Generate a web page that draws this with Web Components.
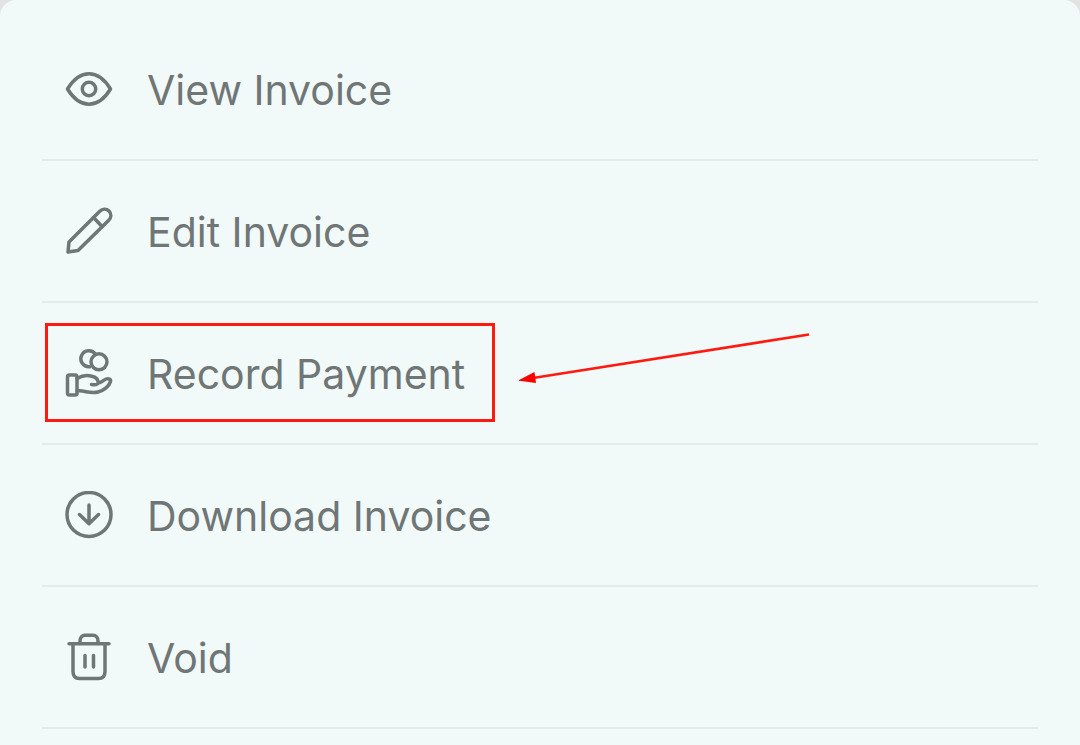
<!DOCTYPE html>
<html lang="en">
<head>
<meta charset="utf-8">
<meta name="viewport" content="width=device-width, initial-scale=1">
<title>Invoice actions</title>
<style>
  :root {
    --surface-color: #f1faf9;
    --backdrop-color: #e2e2e2;
    --text-color: #6f7675;
    --border-color: #e4ebea;
    --mark-color: #ff1a10;
    --font-family: Inter, "Liberation Sans", sans-serif;
  }
  body {
    margin: 0;
    background: var(--backdrop-color);
  }
</style>
</head>
<body>
<action-sheet>
  <action-item icon="eye">View Invoice</action-item>
  <action-item icon="pencil">Edit Invoice</action-item>
  <action-item icon="payment">Record Payment<callout-mark slot="mark"></callout-mark></action-item>
  <action-item icon="download">Download Invoice</action-item>
  <action-item icon="trash">Void</action-item>
</action-sheet>

<script>
const icons = {
  eye: `
    <path d="M2.5 24C8 15 15.5 8.8 24 8.8S40 15 45.5 24C40 33 32.5 39.2 24 39.2S8 33 2.5 24Z"/>
    <circle cx="24" cy="24" r="6.7"/>`,
  pencil: `
    <path d="M3 45 4 35 34.500 4.500C37.500 1.500 41.500 1.500 44 4S46.500 10.500 43.500 13.500L13 43.500Z"/>
    <path d="M28.500 10.500 37 19.500"/>`,
  payment: `
    <path d="M24.500 17.800A8 8 0 1 1 30.500 5.300"/>
    <circle cx="34" cy="12.800" r="8"/>
    <rect x="2.500" y="26" width="9.500" height="20" rx="2"/>
    <path d="M12 29.500C17 26.500 22 26 26 27C30.500 28 33.500 30.500 33 34C32.700 35.800 30.500 36 26.500 35.500M33.500 34C37 33.500 38.500 31 41 30C43.500 29 46 30.500 45.500 32.500C44.500 37 38 42 33 43C25 45 19 41 12 42"/>`,
  download: `
    <circle cx="24" cy="23.500" r="22"/>
    <path d="M24 14V32.500M14.500 23.500 24 32.700 33.500 23.500"/>`,
  trash: `
    <path d="M4 10.800H44M8 10.800V38.500C8 43 10.500 45.500 14.500 45.500H33.500C37.500 45.500 40 43 40 38.500V10.800"/>
    <path d="M15 10.500V8C15 4.500 17 2.300 20 2.300H28C31 2.300 33 4.500 33 8V10.500M20 22.500V34M28.500 22.500V34"/>`,
};

class ActionSheet extends HTMLElement {
  constructor() {
    super();
    this.attachShadow({ mode: "open" });
  }

  connectedCallback() {
    this.shadowRoot.innerHTML = `
      <style>
        :host {
          display: block;
          box-sizing: border-box;
          min-height: 100vh;
          padding: 19px 42px 0;
          background: var(--surface-color);
          border-radius: 16px 16px 0 0;
          font-family: var(--font-family);
          color: var(--text-color);
        }
        nav {
          display: flex;
          flex-direction: column;
        }
      </style>
      <nav aria-label="Invoice actions"><slot></slot></nav>
    `;
  }
}

class ActionItem extends HTMLElement {
  constructor() {
    super();
    this.attachShadow({ mode: "open" });
  }

  connectedCallback() {
    this.shadowRoot.innerHTML = `
      <style>
        :host {
          display: block;
          position: relative;
          border-bottom: 2px solid var(--border-color);
        }
        button {
          display: flex;
          align-items: center;
          gap: 34px;
          width: 100%;
          padding: 45px 23px;
          border: 0;
          background: none;
          color: inherit;
          font-family: inherit;
          font-size: 41px;
          line-height: 48px;
          text-align: left;
          cursor: pointer;
        }
        span {
          padding-top: 2px;
        }
        svg {
          flex: none;
          width: 48px;
          height: 48px;
          fill: none;
          stroke: currentColor;
          stroke-width: 3.5;
          stroke-linecap: round;
          stroke-linejoin: round;
        }
      </style>
      <button type="button">
        <svg viewBox="0 0 48 48" aria-hidden="true">${icons[this.getAttribute("icon")]}</svg>
        <span><slot></slot></span>
      </button>
      <slot name="mark"></slot>
    `;
  }
}

// red frame and arrow drawn over the row it is slotted into
class CalloutMark extends HTMLElement {
  constructor() {
    super();
    this.attachShadow({ mode: "open" });
  }

  connectedCallback() {
    this.shadowRoot.innerHTML = `
      <style>
        :host {
          position: absolute;
          top: 20px;
          left: 3px;
          display: flex;
          gap: 24px;
          pointer-events: none;
        }
        .frame {
          box-sizing: border-box;
          width: 450px;
          height: 99px;
          border: 3px solid var(--mark-color);
        }
        svg {
          width: 292px;
          height: 64px;
        }
      </style>
      <div class="frame"></div>
      <svg viewBox="0 0 292 64" aria-hidden="true">
        <path d="M290 11.500 14 55" fill="none" stroke="var(--mark-color)" stroke-width="2.700"/>
        <path d="M-1 57.500 15.500 49 17 60Z" fill="#ff0000"/>
      </svg>
    `;
  }
}

customElements.define("action-sheet", ActionSheet);
customElements.define("action-item", ActionItem);
customElements.define("callout-mark", CalloutMark);
</script>
</body>
</html>
